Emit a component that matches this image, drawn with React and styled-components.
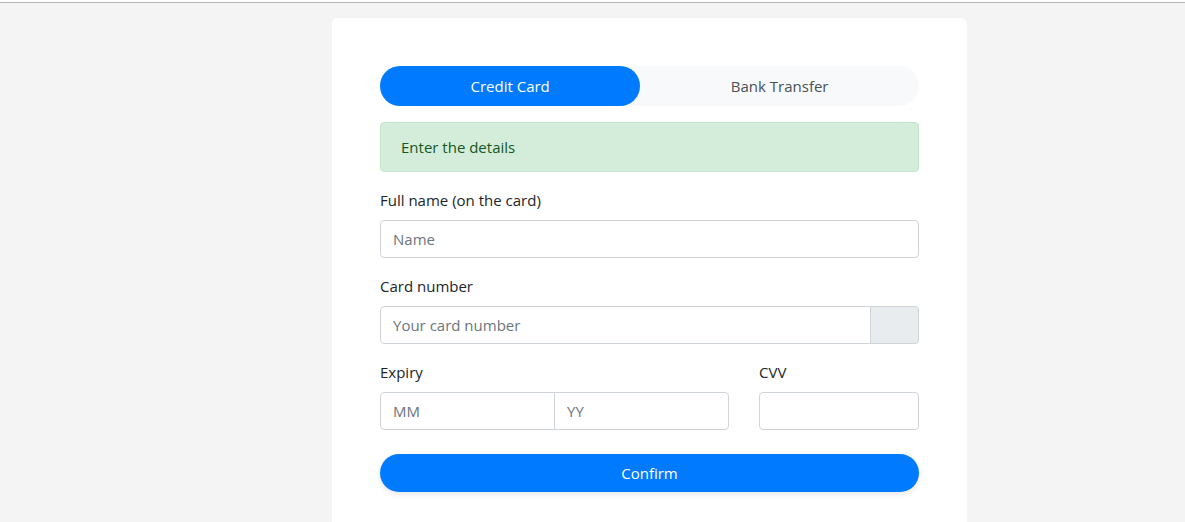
import React, { useState } from 'react';
import styled, { createGlobalStyle } from 'styled-components';

const GlobalStyle = createGlobalStyle`
    * { box-sizing: border-box; }
    body {
        margin: 0;
        background: #f4f4f4;
        font-family: "Open Sans", "Liberation Sans", sans-serif;
        font-size: 15px;
        color: #212529;
    }
`;

const App = () => {
    const [tab, setTab] = useState("card");
    return (
        <>
            <GlobalStyle />
            <TopBar />
            <Page>
                <Card>
                    <Tabs>
                        <Tab active={tab === "card"} onClick={() => setTab("card")}>Credit Card</Tab>
                        <Tab active={tab === "bank"} onClick={() => setTab("bank")}>Bank Transfer</Tab>
                    </Tabs>
                    <Alert>Enter the details</Alert>
                    <Field>
                        <Label>Full name (on the card)</Label>
                        <Input placeholder="Name" />
                    </Field>
                    <Field>
                        <Label>Card number</Label>
                        <Group>
                            <Input placeholder="Your card number" joined="right" />
                            <Addon />
                        </Group>
                    </Field>
                    <Row>
                        <Field>
                            <Label>Expiry</Label>
                            <Group>
                                <Input placeholder="MM" joined="right" />
                                <Input placeholder="YY" joined="left" />
                            </Group>
                        </Field>
                        <Field>
                            <Label>CVV</Label>
                            <Input />
                        </Field>
                    </Row>
                    <Button>Confirm</Button>
                </Card>
            </Page>
        </>
    );
};

const TopBar = styled.div`
    height: 3px;
    background: #fff;
    border-bottom: 1px solid #b5b5b5;
`;

const Page = styled.div`
    padding: 15px 0 0 332px;
`;

const Card = styled.div`
    width: 635px;
    min-height: 520px;
    background: #fff;
    border-radius: 6px;
    padding: 48px;
`;

const Tabs = styled.div`
    display: flex;
    background: #f8f9fa;
    border-radius: 20px;
    margin-bottom: 16px;
`;

const Tab = styled.button`
    flex: 1 1 auto;
    height: 40px;
    border: none;
    border-radius: 20px;
    font: inherit;
    cursor: pointer;
    background: ${props => props.active ? "#007bff" : "transparent"};
    color: ${props => props.active ? "#fff" : "#495057"};
`;

const Alert = styled.div`
    height: 50px;
    padding: 0 20px;
    display: flex;
    align-items: center;
    background: #d4edda;
    border: 1px solid #c3e6cb;
    border-radius: 4px;
    color: #155724;
    margin-bottom: 16px;
`;

const Field = styled.div`
    display: flex;
    flex-direction: column;
    margin-bottom: 16px;
`;

const Label = styled.label`
    line-height: 24px;
    margin-bottom: 8px;
`;

const Group = styled.div`
    display: flex;
    & > input { flex: 1 1 0; }
`;

const Input = styled.input`
    width: 100%;
    min-width: 0;
    height: 38px;
    padding: 0 12px;
    border: 1px solid #ced4da;
    border-radius: ${props => props.joined === "right" ? "4px 0 0 4px" : props.joined === "left" ? "0 4px 4px 0" : "4px"};
    ${props => props.joined === "left" && "margin-left: -1px;"}
    font: inherit;
    color: #495057;
    outline: none;
    &::placeholder { color: #6c757d; }
`;

const Addon = styled.div`
    flex: 0 0 49px;
    height: 38px;
    margin-left: -1px;
    background: #e9ecef;
    border: 1px solid #ced4da;
    border-radius: 0 4px 4px 0;
`;

const Row = styled.div`
    display: grid;
    grid-template-columns: 349px 160px;
    column-gap: 30px;
    margin-bottom: 8px;
`;

const Button = styled.button`
    width: 100%;
    height: 38px;
    border: none;
    border-radius: 19px;
    background: #007bff;
    color: #fff;
    font: inherit;
    cursor: pointer;
    box-shadow: 0 2px 6px rgba(0, 0, 0, 0.1);
`;

export default App;
